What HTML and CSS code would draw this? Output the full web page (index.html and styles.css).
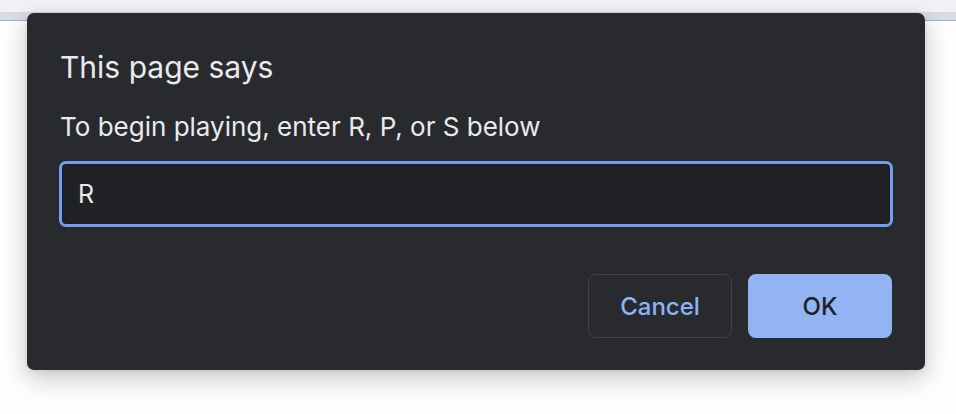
FILE: index.html
```html
<!DOCTYPE html>
<html>
<head>
<meta charset="utf-8">
<link rel="stylesheet" href="styles.css">
</head>
<body>
<div class="page">
  <div class="topbar"></div>
  <div class="band"></div>
  <div class="content"></div>
  <div class="dialog" role="dialog">
    <h1 class="title">This page says</h1>
    <p class="message">To begin playing, enter R, P, or S below</p>
    <div class="field">R</div>
    <div class="actions">
      <button class="btn cancel">Cancel</button>
      <button class="btn ok">OK</button>
    </div>
  </div>
</div>
</body>
</html>
```

FILE: styles.css
```css
html, body {
  margin: 0;
  padding: 0;
  background: #ffffff;
}
.page {
  position: relative;
  width: 956px;
  height: 414px;
  overflow: hidden;
  font-family: Inter, "Noto Sans", sans-serif;
}
.topbar {
  height: 12px;
  background: #f2f2f4;
}
.band {
  height: 8px;
  background: #d6dde5;
  border-bottom: 1px solid #aab3bd;
}
.content {
  height: 393px;
  background: #fdfdfd;
}
.dialog {
  position: absolute;
  left: 27px;
  top: 13px;
  width: 898px;
  height: 357px;
  box-sizing: border-box;
  background: #292a2d;
  border-radius: 7px;
  box-shadow: 0 8px 24px rgba(0, 0, 0, 0.22), 0 0 6px rgba(0, 0, 0, 0.08);
  padding: 0 32px;
  display: flex;
  flex-direction: column;
}
.title {
  margin: 36px 0 0 1px;
  font-size: 30px;
  font-weight: 400;
  line-height: 36px;
  color: #e8eaed;
}
.message {
  margin: 26px 0 0 1px;
  font-size: 26px;
  line-height: 32px;
  color: #e8eaed;
}
.field {
  margin-top: 18px;
  height: 66px;
  box-sizing: border-box;
  border: 3px solid #729df0;
  border-radius: 7px;
  background: #202124;
  color: #e8eaed;
  font-size: 25px;
  display: flex;
  align-items: center;
  padding-left: 16px;
}
.actions {
  margin-top: 47px;
  display: flex;
  justify-content: flex-end;
  gap: 16px;
  padding-right: 1px;
}
.btn {
  height: 64px;
  width: 144px;
  box-sizing: border-box;
  border-radius: 8px;
  font-family: Inter, "Noto Sans", sans-serif;
  font-size: 24px;
  font-weight: 500;
  cursor: pointer;
}
.cancel {
  background: #292a2d;
  border: 1px solid #3f4145;
  color: #8ab4f8;
}
.ok {
  background: #93b4f2;
  border: none;
  color: #202124;
}
```
